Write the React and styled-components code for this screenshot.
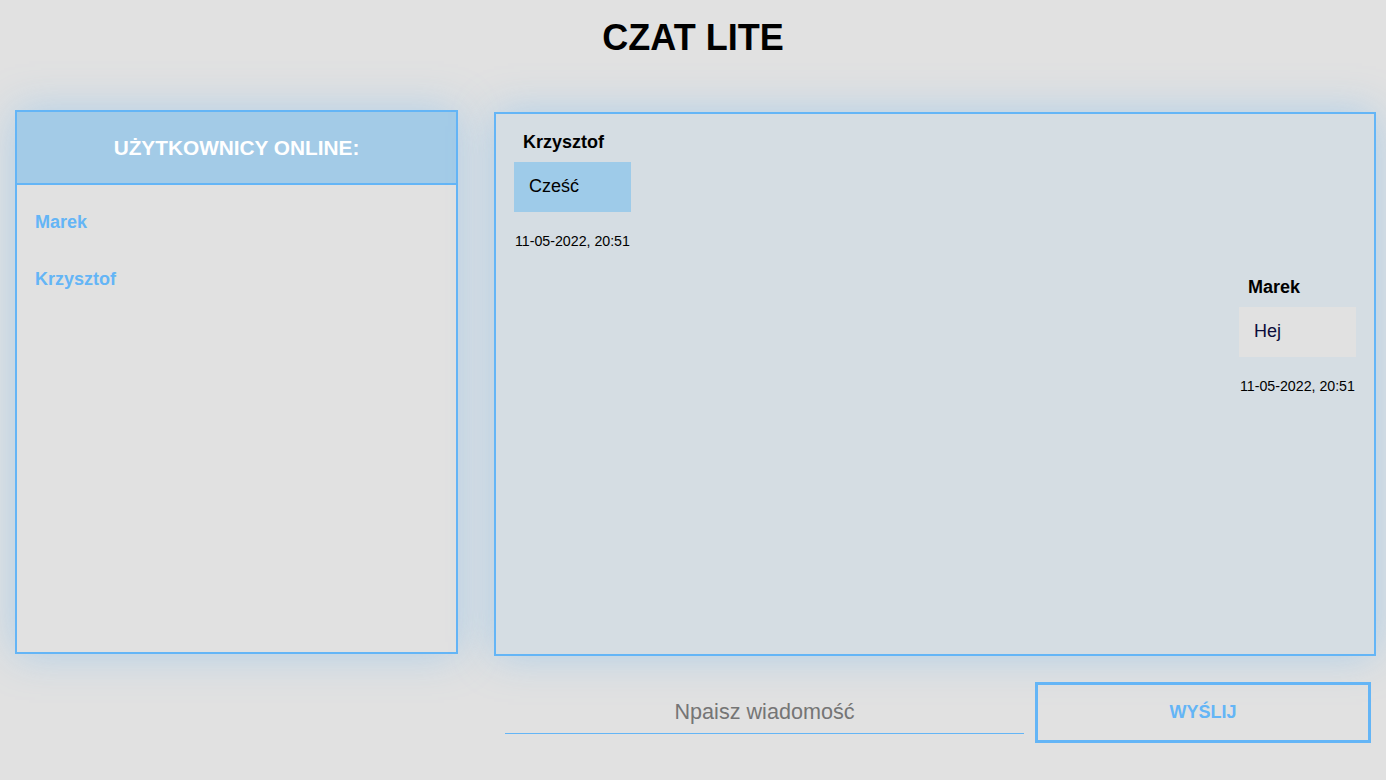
import React from "react";
import styled, { createGlobalStyle } from "styled-components";

const Global = createGlobalStyle`
  html, body { margin: 0; padding: 0; background: #e1e1e1; }
  body { font-family: "Liberation Sans", Arial, sans-serif; color: #000; }
  * { box-sizing: border-box; }
`;

const Page = styled.div`
  width: 1386px;
  height: 780px;
  overflow: hidden;
  display: flex;
  flex-direction: column;
`;

const Title = styled.h1`
  margin: 0;
  height: 110px;
  padding-top: 18px;
  text-align: center;
  font-size: 36px;
  line-height: 40px;
  font-weight: 700;
`;

const Main = styled.div`
  display: flex;
  gap: 36px;
  padding-left: 15px;
  align-items: flex-start;
`;

const Panel = styled.div`
  border: 2px solid #64b5f6;
  box-shadow: 0 0 40px rgba(100, 181, 246, 0.4);
  height: 544px;
`;

const UsersPanel = styled(Panel)`
  width: 443px;
  display: flex;
  flex-direction: column;
`;

const UsersHeader = styled.div`
  height: 73px;
  background: #a3cbe7;
  border-bottom: 2px solid #64b5f6;
  display: flex;
  align-items: center;
  justify-content: center;
  color: #fff;
  font-weight: 700;
  font-size: 20.8px;
`;

const UserList = styled.ul`
  list-style: none;
  margin: 0;
  padding: 27px 0 0 18px;
  display: flex;
  flex-direction: column;
  gap: 36px;
`;

const User = styled.li`
  color: #64b5f6;
  font-weight: 700;
  font-size: 18px;
  line-height: 21px;
`;

const ChatPanel = styled(Panel)`
  margin-top: 2px;
  width: 882px;
  background: #d5dde3;
  padding: 17px 18px 0 18px;
  display: flex;
  flex-direction: column;
  gap: 27px;
`;

const Message = styled.div`
  display: flex;
  flex-direction: column;
  align-self: ${(p) => (p.$mine ? "flex-end" : "flex-start")};
  width: 117px;
`;

const Author = styled.div`
  font-weight: 700;
  font-size: 18px;
  line-height: 22px;
  padding-left: 9px;
  margin-bottom: 9px;
`;

const Bubble = styled.div`
  height: 50px;
  background: ${(p) => (p.$mine ? "#e1e1e1" : "#9ecbe9")};
  color: ${(p) => (p.$mine ? "#0b0b3a" : "#000")};
  font-size: 18px;
  line-height: 20px;
  padding: 14px 15px;
`;

const Time = styled.div`
  margin-top: 21px;
  font-size: 14.2px;
  line-height: 16px;
  white-space: nowrap;
  padding-left: 1px;
`;

const Footer = styled.div`
  display: flex;
  align-items: flex-end;
  padding: 26px 0 0 505px;
  gap: 11px;
`;

const Input = styled.input`
  width: 519px;
  height: 46px;
  margin-bottom: 9px;
  border: none;
  border-bottom: 1px solid #64b5f6;
  background: transparent;
  outline: none;
  text-align: center;
  font-family: "Liberation Sans", Arial, sans-serif;
  font-size: 21.6px;
  padding-top: 4px;
  &::placeholder { color: #757575; }
`;

const SendButton = styled.button`
  width: 336px;
  height: 61px;
  border: 3px solid #64b5f6;
  background: transparent;
  color: #64b5f6;
  font-family: "Liberation Sans", Arial, sans-serif;
  font-weight: 700;
  font-size: 18px;
  cursor: pointer;
`;

export default function App() {
  return (
    <>
      <Global />
      <Page>
        <Title>CZAT LITE</Title>
        <Main>
          <UsersPanel>
            <UsersHeader>UŻYTKOWNICY ONLINE:</UsersHeader>
            <UserList>
              <User>Marek</User>
              <User>Krzysztof</User>
            </UserList>
          </UsersPanel>
          <ChatPanel>
            <Message>
              <Author>Krzysztof</Author>
              <Bubble>Cześć</Bubble>
              <Time>11-05-2022, 20:51</Time>
            </Message>
            <Message $mine>
              <Author>Marek</Author>
              <Bubble $mine>Hej</Bubble>
              <Time>11-05-2022, 20:51</Time>
            </Message>
          </ChatPanel>
        </Main>
        <Footer>
          <Input placeholder="Npaisz wiadomość" />
          <SendButton>WYŚLIJ</SendButton>
        </Footer>
      </Page>
    </>
  );
}
